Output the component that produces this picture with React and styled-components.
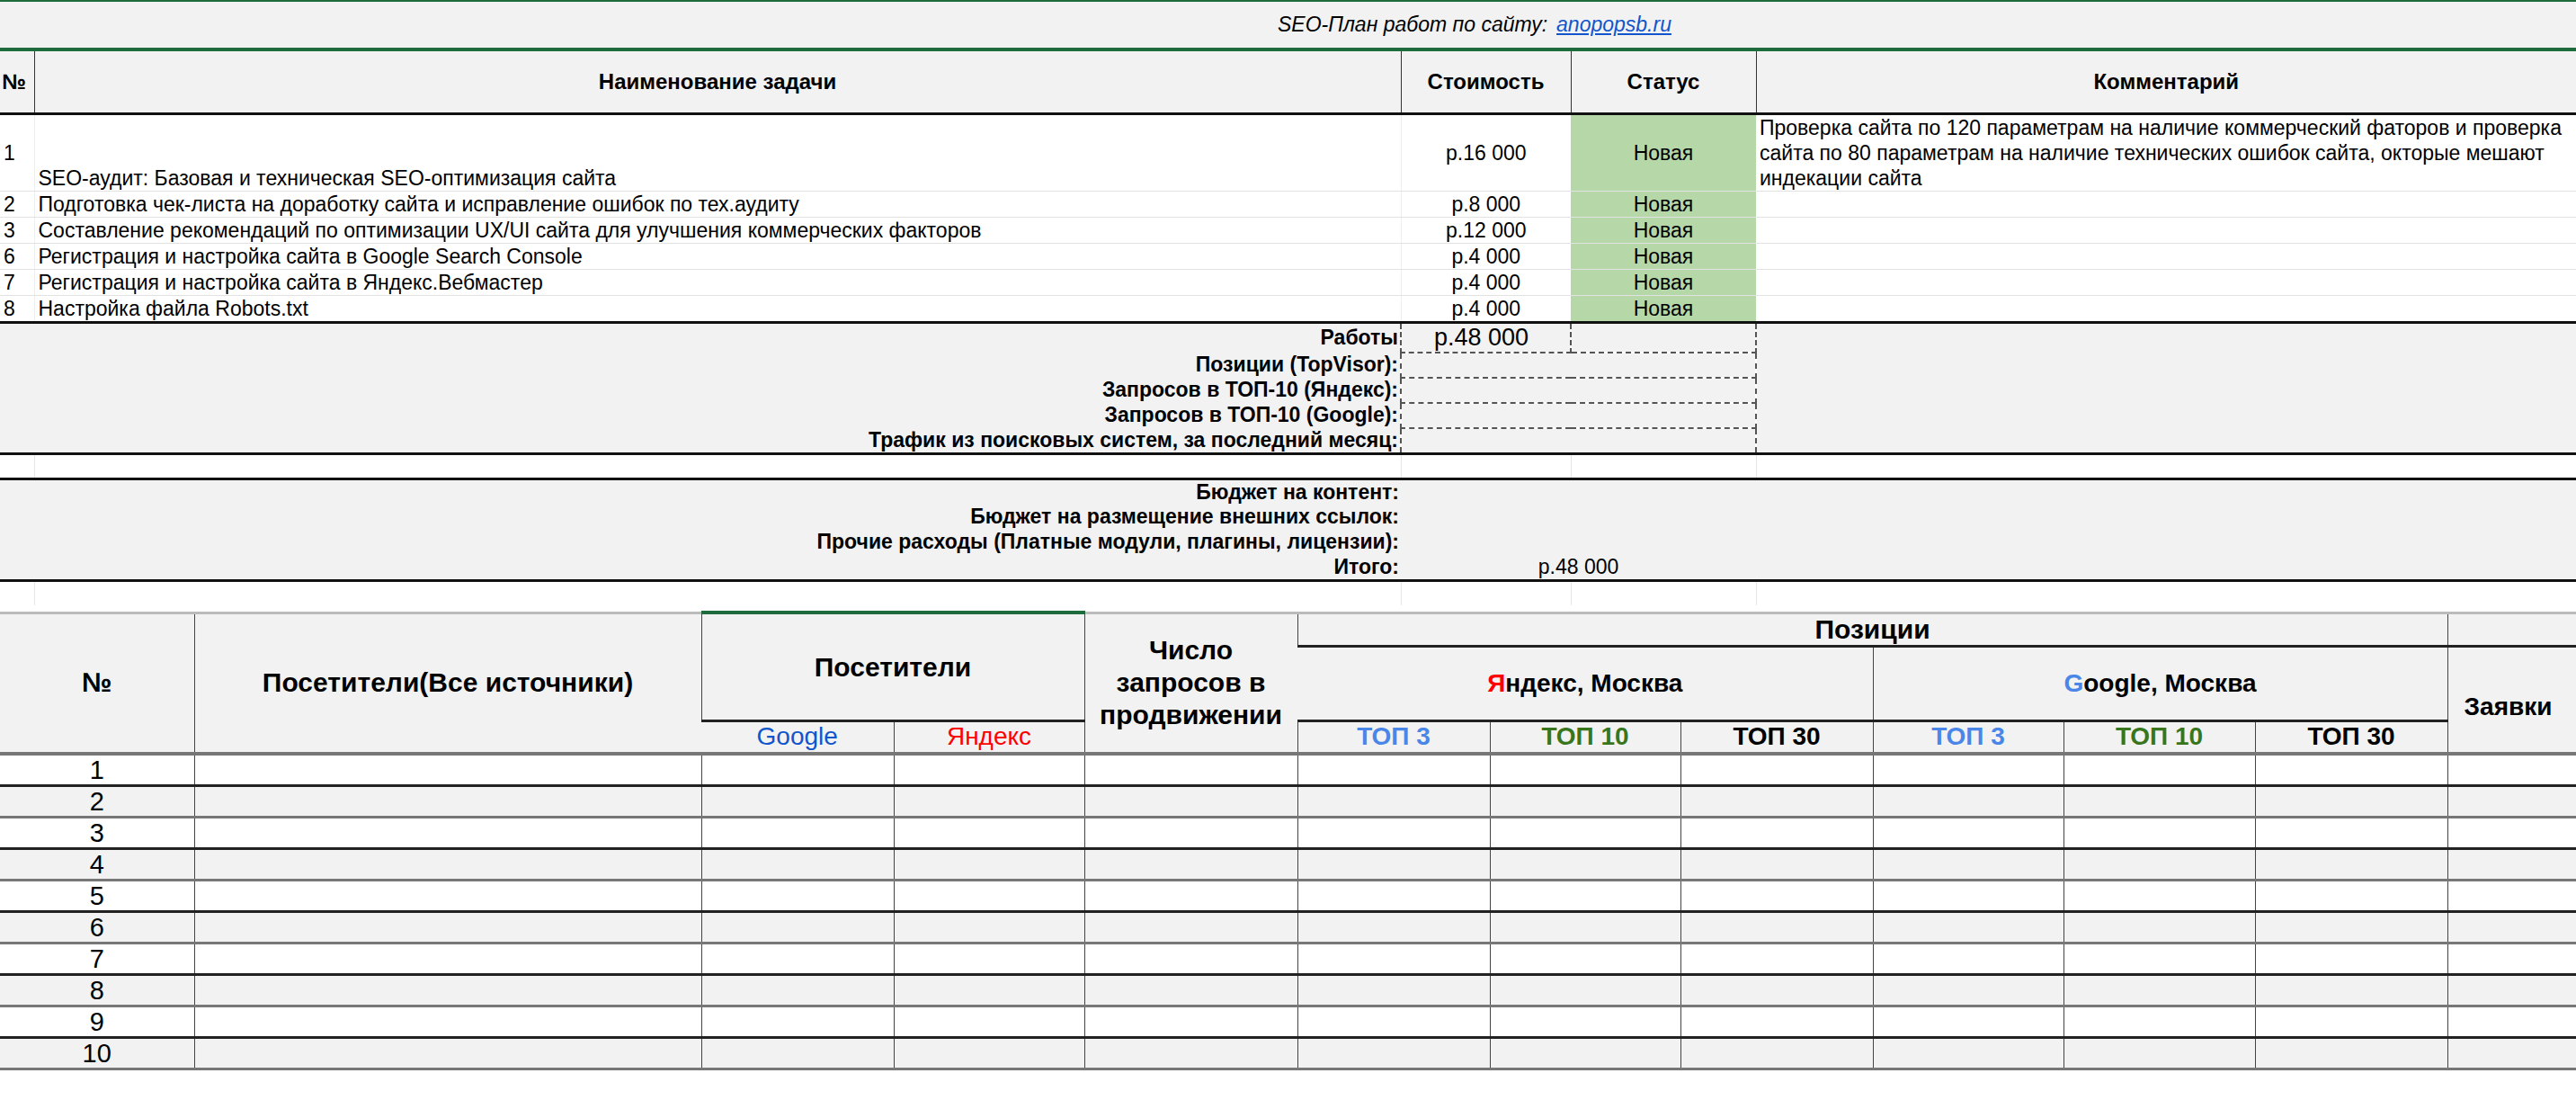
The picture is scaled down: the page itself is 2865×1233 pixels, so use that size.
import React from 'react';
import styled, { createGlobalStyle } from 'styled-components';

const Global = createGlobalStyle`
  html, body { margin: 0; padding: 0; background: #fff; }
  body { font-family: "Liberation Sans", Arial, sans-serif; color: #000; width: 2865px; overflow: hidden; }
`;

const Sheet = styled.div`
  width: 2865px;
  height: 1233px;
  overflow: hidden;
  border-top: 2px solid #1e6b3c;
`;

const TitleBar = styled.div`
  height: 51px;
  background: #f2f2f2;
  border-bottom: 4px solid #1e6b3c;
  display: flex;
  align-items: center;
  padding-left: 1421px;
  font-size: 23px;
  font-style: italic;
  gap: 10px;
`;

const Link = styled.a`
  color: #1155cc;
  text-decoration: underline;
`;

const Table = styled.table`
  border-collapse: collapse;
  table-layout: fixed;
  width: 2865px;
  font-size: 23px;
  td, th { padding: 0 4px; overflow: hidden; white-space: nowrap; }
`;

const HeadRow = styled.tr`
  height: 69px;
  background: #f2f2f2;
  th { font-weight: bold; font-size: 24px; border-left: 1px solid #333; border-bottom: 3px solid #111; }
  th:first-child { border-left: none; text-align: left; padding-left: 2px; }
`;

const Row = styled.tr`
  height: ${p => p.$h || 28}px;
  td { border-bottom: 1px solid #e2e2e2; line-height: 28px; }
`;

const Num = styled.td`
  text-align: left;
  vertical-align: ${p => p.$va || 'middle'};
  padding-left: 4px !important;
`;

const Name = styled.td`
  vertical-align: ${p => p.$va || 'middle'};
  border-left: 1px solid #eee;
`;

const Cost = styled.td`
  text-align: center;
  border-left: 1px solid #eee;
`;

const Status = styled.td`
  background: #b6d7a8;
  text-align: center;
`;

const Comment = styled.td`
  vertical-align: top;
  white-space: normal !important;
  line-height: 28px !important;
`;

const Summary = styled.tr`
  height: 28px;
  background: #f2f2f2;
  ${p => p.$top && 'td { border-top: 3px solid #111; }'}
  ${p => p.$bottom && 'td { border-bottom: 3px solid #111; }'}
`;

const Label = styled.td`
  text-align: right;
  font-weight: bold;
  font-size: 23px;
  padding-right: 2px !important;
`;

const Dashed = styled.td`
  border: 2px dashed #555;
  border-top-style: ${p => (p.$solidTop ? 'solid' : 'dashed')};
  text-align: ${p => p.$align || 'center'};
  font-size: ${p => p.$fs || 23}px;
  padding-left: ${p => p.$pl || 4}px !important;
`;

const Plain = styled.td`
  text-align: ${p => p.$align || 'left'};
`;

const Blank = styled.tr`
  height: ${p => p.$h}px;
  td { border-left: 1px solid #e6e6e6; }
  td:first-child { border-left: none; }
`;

const Stats = styled.table`
  border-collapse: collapse;
  table-layout: fixed;
  width: 2865px;
  margin-top: 6px;
  font-size: 29px;
  border-top: 3px solid #bbb;
  th, td { border-left: 1px solid #444; padding: 0; text-align: center; white-space: nowrap; overflow: hidden; }
  th:first-child, td:first-child { border-left: none; }
`;

const SHead = styled.tr`
  background: #f2f2f2;
  height: ${p => p.$h}px;
  th { font-weight: bold; font-size: ${p => p.$fs || 28}px; }
`;

const Sub = styled.th`
  border-top: 3px solid #222;
  font-weight: ${p => (p.$normal ? 'normal' : 'bold')} !important;
  font-size: ${p => p.$fs || 28}px !important;
  color: ${p => p.$c || '#000'};
  border-bottom: 4px solid #777;
`;

const Tall = styled.th`
  border-bottom: 4px solid #777;
  line-height: 36px;
`;

const Colored = styled.span`
  color: ${p => p.$c};
`;

const DRow = styled.tr`
  height: 35px;
  background: ${p => (p.$alt ? '#f2f2f2' : '#fff')};
  td { border-bottom: 3px solid ${p => (p.$alt ? '#777' : '#222')}; font-size: 29px; line-height: 32px; }
`;

const tasks = [
  ['2', 'Подготовка чек-листа на доработку сайта и исправление ошибок по тех.аудиту', 'р.8 000'],
  ['3', 'Составление рекомендаций по оптимизации UX/UI сайта для улучшения коммерческих факторов', 'р.12 000'],
  ['6', 'Регистрация и настройка сайта в Google Search Console', 'р.4 000'],
  ['7', 'Регистрация и настройка сайта в Яндекс.Вебмастер', 'р.4 000'],
  ['8', 'Настройка файла Robots.txt', 'р.4 000'],
];

const metrics = [
  'Позиции (TopVisor):',
  'Запросов в ТОП-10 (Яндекс):',
  'Запросов в ТОП-10 (Google):',
  'Трафик из поисковых систем, за последний месяц:',
];

const budget = ['Бюджет на контент:', 'Бюджет на размещение внешних ссылок:', 'Прочие расходы (Платные модули, плагины, лицензии):'];

function Cols() {
  return (
    <colgroup>
      <col style={{ width: 38 }} />
      <col style={{ width: 1520 }} />
      <col style={{ width: 189 }} />
      <col style={{ width: 206 }} />
      <col style={{ width: 912 }} />
    </colgroup>
  );
}

export default function App() {
  const statW = [216, 564, 214, 212, 237, 214, 212, 214, 212, 213, 214, 143];
  return (
    <Sheet>
      <Global />
      <TitleBar>
        SEO-План работ по сайту: <Link href="#">anopopsb.ru</Link>
      </TitleBar>
      <Table>
        <Cols />
        <tbody>
          <HeadRow>
            <th>№</th>
            <th>Наименование задачи</th>
            <th>Стоимость</th>
            <th>Статус</th>
            <th>Комментарий</th>
          </HeadRow>
          <Row $h={83}>
            <Num>1</Num>
            <Name $va="bottom">SEO-аудит: Базовая и техническая SEO-оптимизация сайта</Name>
            <Cost>р.16 000</Cost>
            <Status>Новая</Status>
            <Comment>
              Проверка сайта по 120 параметрам на наличие коммерческий фаторов и проверка сайта по 80 параметрам на наличие технических ошибок сайта, окторые мешают индекации сайта
            </Comment>
          </Row>
          {tasks.map(t => (
            <Row key={t[0]}>
              <Num>{t[0]}</Num>
              <Name>{t[1]}</Name>
              <Cost>{t[2]}</Cost>
              <Status>Новая</Status>
              <td />
            </Row>
          ))}
          <Summary $top>
            <Label colSpan={2}>Работы</Label>
            <Dashed $solidTop $align="left" $fs={27} $pl={36}>р.48 000</Dashed>
            <Dashed $solidTop />
            <td />
          </Summary>
          {metrics.map((m, i) => (
            <Summary key={m} $bottom={i === metrics.length - 1}>
              <Label colSpan={2}>{m}</Label>
              <Dashed colSpan={2} />
              <td />
            </Summary>
          ))}
          <Blank $h={28}>
            <td />
            <td />
            <td />
            <td />
            <td />
          </Blank>
          {budget.map((b, i) => (
            <Summary key={b} $top={i === 0}>
              <Label colSpan={2}>{b}</Label>
              <td colSpan={3} />
            </Summary>
          ))}
          <Summary $bottom>
            <Label colSpan={2}>Итого:</Label>
            <Plain colSpan={2} $align="center">р.48 000</Plain>
            <td />
          </Summary>
          <Blank $h={28}>
            <td />
            <td />
            <td />
            <td />
            <td />
          </Blank>
        </tbody>
      </Table>
      <Stats>
        <colgroup>
          {statW.map((w, i) => (
            <col key={i} style={{ width: w }} />
          ))}
        </colgroup>
        <thead>
          <SHead $h={34} $fs={30}>
            <Tall rowSpan={3}>№</Tall>
            <Tall rowSpan={3}>Посетители(Все источники)</Tall>
            <th colSpan={2} rowSpan={2} style={{ borderTop: '4px solid #1e6b3c' }}>Посетители</th>
            <Tall rowSpan={3}>Число<br />запросов в<br />продвижении</Tall>
            <th colSpan={6}>Позиции</th>
            <th />
          </SHead>
          <SHead $h={72}>
            <Sub colSpan={3} style={{ borderBottom: 'none' }}><Colored $c="#ff0000">Я</Colored>ндекс, Москва</Sub>
            <Sub colSpan={3} style={{ borderBottom: 'none' }}><Colored $c="#4a86e8">G</Colored>oogle, Москва</Sub>
            <Sub style={{ borderBottom: 'none', textAlign: 'left', paddingLeft: 18, paddingTop: 50 }}>Заявки</Sub>
          </SHead>
          <SHead $h={36}>
            <Sub $normal $c="#1155cc">Google</Sub>
            <Sub $normal $c="#ff0000">Яндекс</Sub>
            <Sub $c="#4a86e8">ТОП 3</Sub>
            <Sub $c="#38761d">ТОП 10</Sub>
            <Sub>ТОП 30</Sub>
            <Sub $c="#4a86e8">ТОП 3</Sub>
            <Sub $c="#38761d">ТОП 10</Sub>
            <Sub>ТОП 30</Sub>
            <Sub style={{ borderTop: 'none' }} />
          </SHead>
        </thead>
        <tbody>
          {Array.from({ length: 10 }, (_, i) => (
            <DRow key={i} $alt={i % 2 === 1}>
              <td>{i + 1}</td>
              {statW.slice(1).map((_, j) => (
                <td key={j} />
              ))}
            </DRow>
          ))}
        </tbody>
      </Stats>
    </Sheet>
  );
}
